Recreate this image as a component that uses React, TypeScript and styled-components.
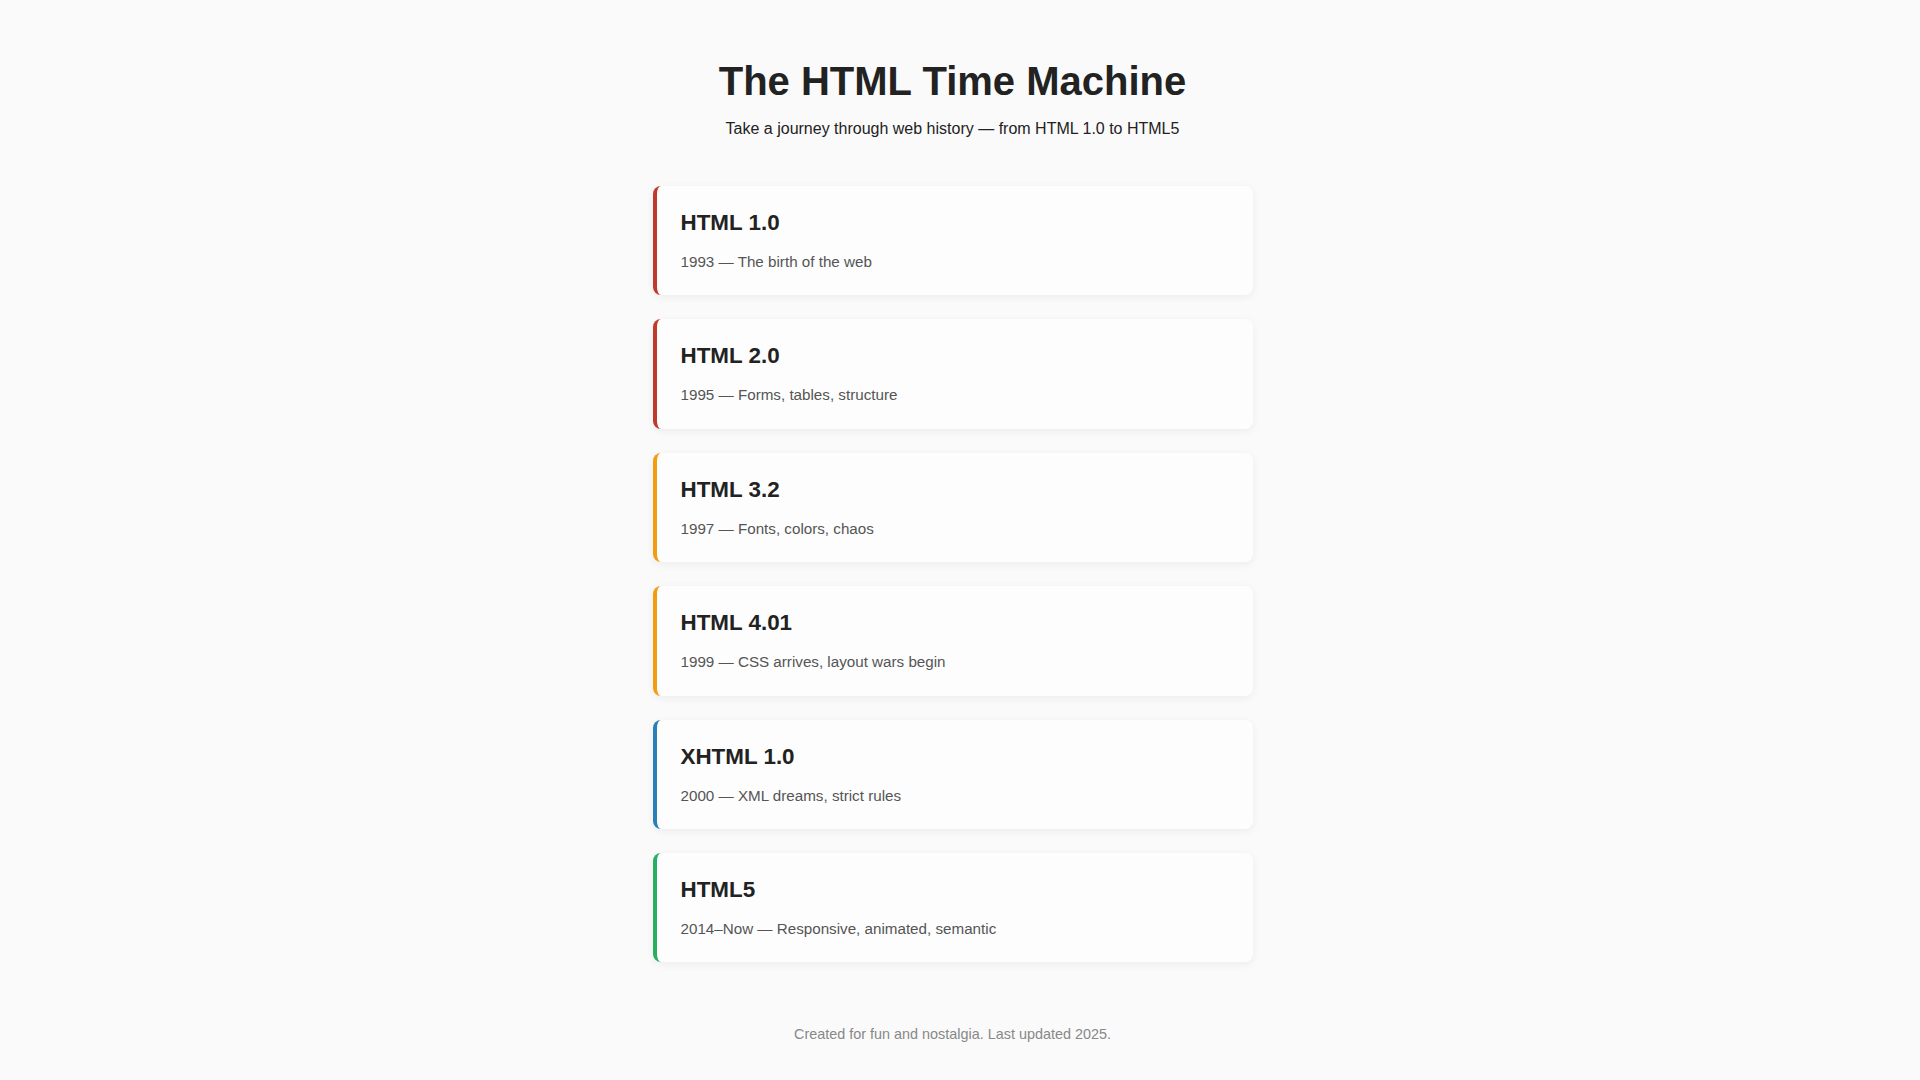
import React, { type FC } from 'react'
import styled, { createGlobalStyle } from 'styled-components'

const GlobalStyle = createGlobalStyle`
  html, body {
    margin: 0;
    padding: 0;
  }

  body {
    /* room for the classic 15px scrollbar seen in the reference */
    padding-right: 15px;
    background: #fafafa;
    color: #222;
    font-family: 'Liberation Sans', Arial, sans-serif;
  }
`

const Page = styled.div`
  max-width: 600px;
  margin: 0 auto;
  padding: 59px 20px 56px;
`

const Header = styled.header`
  text-align: center;
  margin-bottom: 48px;
`

const Title = styled.h1`
  margin: 0 0 16px;
  font-size: 40px;
  font-weight: 700;
  color: #222;
`

const Subtitle = styled.p`
  margin: 0;
  font-size: 16px;
  color: #222;
`

const Timeline = styled.main`
  display: flex;
  flex-direction: column;
  gap: 24px;
`

const Card = styled.section<{ $accent: string }>`
  background: #fdfdfd;
  border-left: 4px solid ${(p) => p.$accent};
  border-radius: 8px;
  padding: 24px;
  box-shadow: 0 2px 8px rgba(0, 0, 0, 0.06);
`

const Version = styled.h2`
  margin: 0 0 15.5px;
  font-size: 22.4px;
  line-height: 26.4px;
  font-weight: 700;
  color: #222;
`

const Description = styled.p`
  margin: 0;
  font-size: 15.2px;
  line-height: 19.5px;
  color: #555;
`

const Footer = styled.footer`
  margin-top: 64px;
  text-align: center;
  font-size: 14.4px;
  color: #888;
`

const versions = [
  { name: 'HTML 1.0', text: '1993 — The birth of the web', color: '#c0392b' },
  { name: 'HTML 2.0', text: '1995 — Forms, tables, structure', color: '#c0392b' },
  { name: 'HTML 3.2', text: '1997 — Fonts, colors, chaos', color: '#f39c12' },
  { name: 'HTML 4.01', text: '1999 — CSS arrives, layout wars begin', color: '#f39c12' },
  { name: 'XHTML 1.0', text: '2000 — XML dreams, strict rules', color: '#2980b9' },
  { name: 'HTML5', text: '2014–Now — Responsive, animated, semantic', color: '#27ae60' },
]

const App: FC = () => {
  return (
    <>
      <GlobalStyle />
      <Page>
        <Header>
          <Title>The HTML Time Machine</Title>
          <Subtitle>Take a journey through web history — from HTML 1.0 to HTML5</Subtitle>
        </Header>

        <Timeline>
          {versions.map((v) => (
            <Card key={v.name} $accent={v.color}>
              <Version>{v.name}</Version>
              <Description>{v.text}</Description>
            </Card>
          ))}
        </Timeline>

        <Footer>Created for fun and nostalgia. Last updated 2025.</Footer>
      </Page>
    </>
  )
}

export default App
